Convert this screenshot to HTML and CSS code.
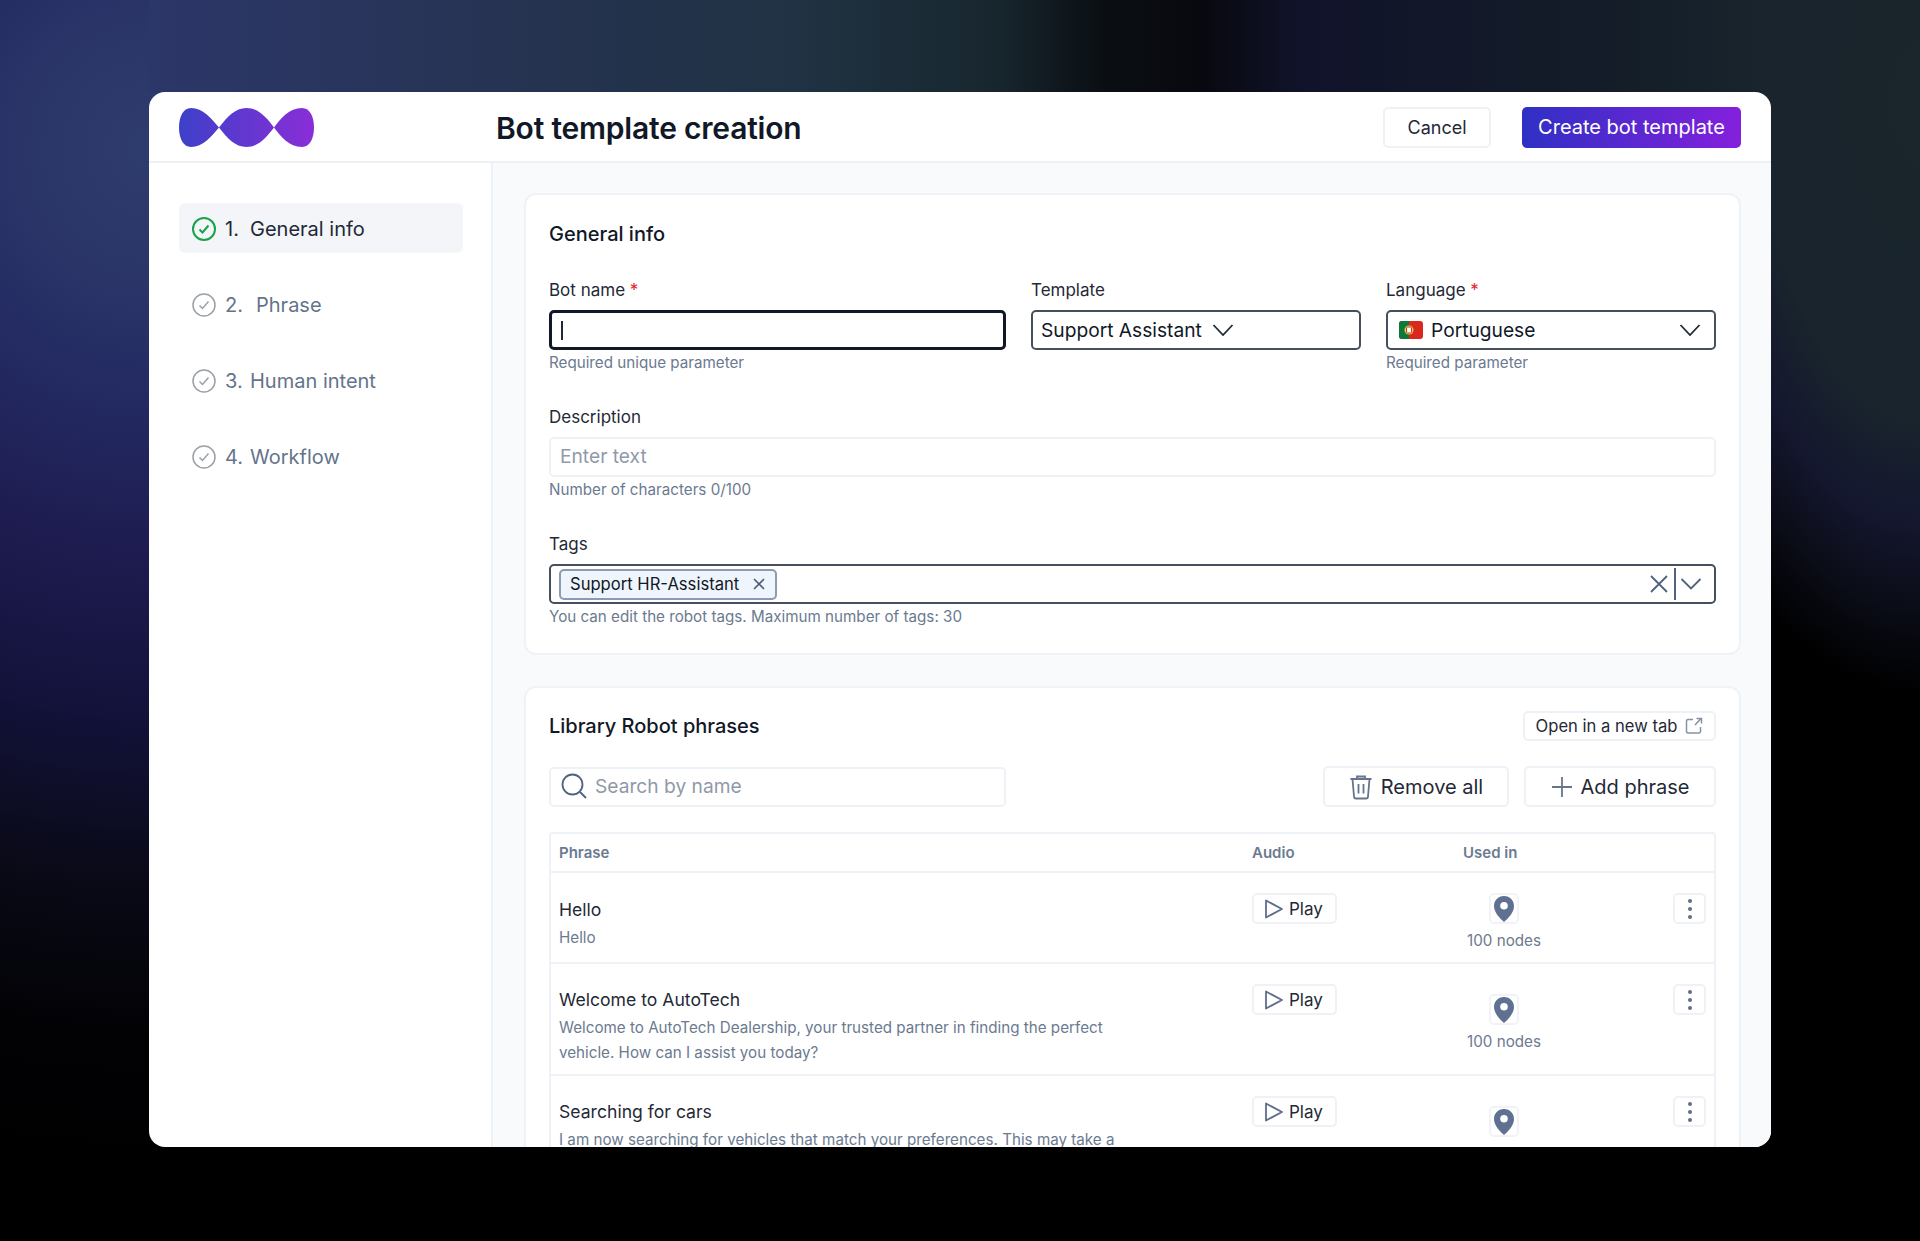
FILE: index.html
```html
<!DOCTYPE html>
<html lang="en">

<head>
  <meta charset="UTF-8">
  <title>Bot template creation</title>
  <link rel="stylesheet" href="styles.css">
</head>

<body>
  <div class="window">
    <header class="topbar">
      <div class="logo-box">
        <svg class="logo" width="135" height="39" viewBox="0 0 135 39">
          <defs>
            <linearGradient id="logo-grad" gradientUnits="userSpaceOnUse" x1="0" y1="0" x2="135" y2="0">
              <stop offset="0" stop-color="#3d40c8" />
              <stop offset="1" stop-color="#8a2ed8" />
            </linearGradient>
          </defs>
          <path fill="url(#logo-grad)" d="M40 19.5C32 10 24 0 12 0C4 0 0 9 0 19.5C0 30 4 39 12 39C24 39 32 29 40 19.5Z" />
          <path fill="url(#logo-grad)" d="M40 19.5C48 9 56 0 67.5 0C79 0 87 9 95 19.5C87 30 79 39 67.5 39C56 39 48 30 40 19.5Z" />
          <path fill="url(#logo-grad)" d="M95 19.5C102 10 110 0 123 0C131 0 135 9 135 19.5C135 30 131 39 123 39C110 39 102 29 95 19.5Z" />
        </svg>
      </div>
      <h1 class="page-title">Bot template creation</h1>
      <button class="btn btn-cancel">Cancel</button>
      <button class="btn btn-primary">Create bot template</button>
    </header>

    <div class="main">
      <nav class="sidebar">
        <a class="step step-active">
          <svg class="step-icon" viewBox="0 0 24 24"><circle cx="12" cy="12" r="11" /><path d="M7.5 12.5l3 3 6-7" /></svg>
          <span class="step-num">1.</span><span>General info</span>
        </a>
        <a class="step">
          <svg class="step-icon" viewBox="0 0 24 24"><circle cx="12" cy="12" r="11" /><path d="M7.5 12.5l3 3 6-7" /></svg>
          <span class="step-num step-num-wide">2.</span><span>Phrase</span>
        </a>
        <a class="step">
          <svg class="step-icon" viewBox="0 0 24 24"><circle cx="12" cy="12" r="11" /><path d="M7.5 12.5l3 3 6-7" /></svg>
          <span class="step-num">3.</span><span>Human intent</span>
        </a>
        <a class="step">
          <svg class="step-icon" viewBox="0 0 24 24"><circle cx="12" cy="12" r="11" /><path d="M7.5 12.5l3 3 6-7" /></svg>
          <span class="step-num">4.</span><span>Workflow</span>
        </a>
      </nav>

      <main class="content">
        <section class="card card-info">
          <h2 class="card-title">General info</h2>

          <div class="field-row">
            <div class="field field-name">
              <label class="label">Bot name <span class="req">*</span></label>
              <div class="input input-focus"><span class="caret"></span></div>
              <div class="helper">Required unique parameter</div>
            </div>
            <div class="field field-select">
              <label class="label">Template</label>
              <div class="input input-dark">
                <span>Support Assistant</span>
                <svg class="chevron" width="22" height="12" viewBox="0 0 22 12"><path d="M1.5 1l9.5 10 9.5-10" /></svg>
              </div>
            </div>
            <div class="field field-select">
              <label class="label">Language <span class="req">*</span></label>
              <div class="input input-dark input-lang">
                <svg class="flag" width="24" height="18" viewBox="0 0 24 18">
                  <rect width="24" height="18" rx="3" fill="#d9281e" />
                  <path d="M3 0h7v18H3a3 3 0 0 1-3-3V3a3 3 0 0 1 3-3z" fill="#0d7a3a" />
                  <circle cx="10" cy="9" r="4.5" fill="#f2d23c" />
                  <rect x="7.5" y="6" width="5" height="6" rx="1" fill="#fff" stroke="#c0392b" />
                </svg>
                <span>Portuguese</span>
                <svg class="chevron chevron-end" width="22" height="12" viewBox="0 0 22 12"><path d="M1.5 1l9.5 10 9.5-10" /></svg>
              </div>
              <div class="helper">Required parameter</div>
            </div>
          </div>

          <div class="field-block">
            <label class="label">Description</label>
            <div class="input input-light"><span class="placeholder">Enter text</span></div>
            <div class="helper">Number of characters 0/100</div>
          </div>

          <div class="field-block">
            <label class="label">Tags</label>
            <div class="input input-dark input-tags">
              <span class="tag">
                Support HR-Assistant
                <svg width="14" height="14" viewBox="0 0 14 14"><path d="M2 2l10 10M12 2L2 12" /></svg>
              </span>
              <span class="tag-tools">
                <svg class="tool-x" width="20" height="20" viewBox="0 0 20 20"><path d="M2 2l16 16M18 2L2 18" /></svg>
                <span class="tool-sep"></span>
                <svg class="tool-down" width="22" height="12" viewBox="0 0 22 12"><path d="M1.5 1l9.5 9.500 9.500-9.500" /></svg>
              </span>
            </div>
            <div class="helper">You can edit the robot tags. Maximum number of tags: 30</div>
          </div>
        </section>

        <section class="card card-phrases">
          <div class="phrases-head">
            <h2 class="card-title">Library Robot phrases</h2>
            <button class="btn-small">
              Open in a new tab
              <svg width="18" height="18" viewBox="0 0 18 18"><path d="M8 2.500H3a1.500 1.500 0 0 0-1.500 1.500v10.500a1.500 1.500 0 0 0 1.500 1.500h11a1.500 1.500 0 0 0 1.500-1.500V10M10 8l6-6.500M11.500 1.500H16.500V6.500" /></svg>
            </button>
          </div>

          <div class="toolbar">
            <div class="input input-light input-search">
              <svg width="26" height="26" viewBox="0 0 26 26"><circle cx="11.500" cy="11.500" r="10" /><path d="M19 19l6 6" /></svg>
              <span class="placeholder">Search by name</span>
            </div>
            <button class="btn-tool btn-remove">
              <svg width="24" height="26" viewBox="0 0 24 26"><path d="M1.500 5h21M8 5V2.500h8V5M3.500 5l1.500 17.500a2 2 0 0 0 2 2h10a2 2 0 0 0 2-2L20.500 5M9.500 10v9.500M14.500 10v9.500" /></svg>
              Remove all
            </button>
            <button class="btn-tool btn-add">
              <svg width="22" height="22" viewBox="0 0 22 22"><path d="M11 1v20M1 11h20" /></svg>
              Add phrase
            </button>
          </div>

          <div class="table">
            <div class="table-head">
              <div>Phrase</div>
              <div>Audio</div>
              <div>Used in</div>
            </div>

            <div class="row">
              <div class="phrase">
                <div class="phrase-title">Hello</div>
                <div class="phrase-text">Hello</div>
              </div>
              <button class="btn-play"><svg width="20" height="22" viewBox="0 0 20 22"><path d="M2 2.500v17l16-8.500z" /></svg>Play</button>
              <div class="used">
                <span class="pin-box"><svg width="22" height="28" viewBox="0 0 22 28"><path fill-rule="evenodd" d="M11 1C5 1 1 5.500 1 11c0 6.500 6 12.500 10 16 4-3.500 10-9.500 10-16C21 5.500 17 1 11 1zm0 13.500a3.800 3.800 0 1 1 0-7.600 3.800 3.800 0 0 1 0 7.600z" /></svg></span>
                <span class="used-count">100 nodes</span>
              </div>
              <button class="btn-more"><i></i><i></i><i></i></button>
            </div>

            <div class="row row-tall">
              <div class="phrase">
                <div class="phrase-title">Welcome to AutoTech</div>
                <div class="phrase-text">Welcome to AutoTech Dealership, your trusted partner in finding the perfect vehicle. How can I assist you today?</div>
              </div>
              <button class="btn-play"><svg width="20" height="22" viewBox="0 0 20 22"><path d="M2 2.500v17l16-8.500z" /></svg>Play</button>
              <div class="used used-low">
                <span class="pin-box"><svg width="22" height="28" viewBox="0 0 22 28"><path fill-rule="evenodd" d="M11 1C5 1 1 5.500 1 11c0 6.500 6 12.500 10 16 4-3.500 10-9.500 10-16C21 5.500 17 1 11 1zm0 13.500a3.800 3.800 0 1 1 0-7.600 3.800 3.800 0 0 1 0 7.600z" /></svg></span>
                <span class="used-count">100 nodes</span>
              </div>
              <button class="btn-more"><i></i><i></i><i></i></button>
            </div>

            <div class="row row-tall">
              <div class="phrase">
                <div class="phrase-title">Searching for cars</div>
                <div class="phrase-text">I am now searching for vehicles that match your preferences. This may take a</div>
              </div>
              <button class="btn-play"><svg width="20" height="22" viewBox="0 0 20 22"><path d="M2 2.500v17l16-8.500z" /></svg>Play</button>
              <div class="used used-low">
                <span class="pin-box"><svg width="22" height="28" viewBox="0 0 22 28"><path fill-rule="evenodd" d="M11 1C5 1 1 5.500 1 11c0 6.500 6 12.500 10 16 4-3.500 10-9.500 10-16C21 5.500 17 1 11 1zm0 13.500a3.800 3.800 0 1 1 0-7.600 3.800 3.800 0 0 1 0 7.600z" /></svg></span>
              </div>
              <button class="btn-more"><i></i><i></i><i></i></button>
            </div>
          </div>
        </section>
      </main>
    </div>
  </div>
</body>
</html>
```

FILE: styles.css
```css
* {
  box-sizing: border-box;
}

html,
body {
  height: 100%;
}

body {
  margin: 0;
  padding: 92px 149px 0;
  overflow: hidden;
  font-family: Inter, "Liberation Sans", sans-serif;
  color: #111827;
  /* band above the window, then the left and right glows */
  background:
    linear-gradient(90deg, #2c3769 0%, #263352 22%, #203243 40%, #18272f 52%, #0a0e12 59%, #08090f 65%, #11132a 71%, #131c28 89%, #19242c 100%) 149px 0 / 1622px 92px no-repeat,
    radial-gradient(ellipse 1000px 1050px at 149px 150px, #2e3b6d 0%, #2c3769 10%, #232b62 23%, #1e1c50 38%, #12123a 54%, #0a0a18 69%, #020205 84%, transparent 100%),
    radial-gradient(ellipse 350px 700px at 1920px 100px, #1a262c 0%, #19242c 45%, #14172f 60%, #0b0d18 72%, transparent 85%),
    #000;
}

button {
  font-family: inherit;
  cursor: pointer;
}

.window {
  width: 1622px;
  height: 1055px;
  background: #fff;
  border-radius: 16px;
  overflow: hidden;
  display: flex;
  flex-direction: column;
}

/* top bar */
.topbar {
  flex: none;
  height: 71px;
  display: flex;
  align-items: center;
  padding: 1px 30px 0 30px;
  border-bottom: 2px solid #eceff3;
}

.logo-box {
  width: 317px;
  display: flex;
}

.page-title {
  flex: 1;
  margin: 2px 0 0;
  font-size: 30px;
  font-weight: 600;
  letter-spacing: -0.2px;
}

.btn {
  height: 41px;
  border-radius: 5px;
}

.btn-cancel {
  width: 108px;
  margin-right: 31px;
  background: #fff;
  border: 2px solid #eef1f5;
  color: #1f2937;
  font-size: 18px;
}

.btn-primary {
  width: 219px;
  border: none;
  color: #fff;
  font-size: 20px;
  background: linear-gradient(90deg, #2f30c4, #8420dc);
}

/* sidebar */
.main {
  flex: 1;
  min-height: 0;
  display: flex;
}

.sidebar {
  flex: none;
  width: 344px;
  padding: 40px 28px 0 30px;
  border-right: 2px solid #eef1f5;
}

.step {
  height: 50px;
  margin-bottom: 26px;
  padding: 2px 0 0 13px;
  display: flex;
  align-items: center;
  border-radius: 6px;
  font-size: 20px;
  color: #64748b;
}

.step-icon {
  width: 24px;
  height: 24px;
  margin-right: 9px;
  fill: none;
  stroke: #9aa0a8;
  stroke-width: 1.5;
}

.step-num {
  width: 25px;
}

.step-num-wide {
  width: 31px;
}

.step-active {
  background: #f3f5f9;
  color: #1f2937;
}

.step-active .step-icon {
  stroke: #16a34a;
  stroke-width: 2;
}

/* content */
.content {
  flex: 1;
  min-width: 0;
  padding: 30px 30px 0 31px;
  background: #f8fafc;
  overflow: hidden;
}

.card {
  background: #fff;
  border: 2px solid #eff2f6;
  border-radius: 12px;
  padding: 24px 23px 0;
}

.card-info {
  height: 462px;
  margin-bottom: 31px;
}

.card-phrases {
  padding-top: 23px;
}

.card-title {
  margin: 0;
  font-size: 20px;
  font-weight: 500;
  line-height: 30px;
}

.field-row {
  margin-top: 30px;
  display: flex;
  gap: 25px;
}

.field-name {
  width: 457px;
}

.field-select {
  width: 330px;
}

.label {
  display: block;
  height: 22px;
  margin-bottom: 9px;
  font-size: 17px;
  line-height: 22px;
  color: #1f2937;
}

.req {
  color: #e11d2e;
}

.helper {
  margin-top: 3px;
  font-size: 15.2px;
  line-height: 20px;
  color: #6b7a90;
}

.field-block {
  margin-top: 33px;
}

.input {
  height: 40px;
  display: flex;
  align-items: center;
  padding: 0 8px;
  border-radius: 5px;
  background: #fff;
  font-size: 19.2px;
}

.input-focus {
  border: 3px solid #111827;
}

.input-dark {
  border: 2px solid #454f5e;
}

.input-light {
  padding: 0 9px 2px;
  border: 2px solid #eef1f5;
}

.caret {
  width: 2px;
  height: 19px;
  margin-left: 1px;
  background: #1f2937;
}

.placeholder {
  color: #8f99a8;
}

.chevron {
  margin-left: 10px;
  fill: none;
  stroke: #1f2937;
  stroke-width: 1.8;
}

.chevron-end {
  margin-left: auto;
  margin-right: 5px;
}

.input-lang {
  padding-left: 11px;
}

.flag {
  margin-right: 8px;
}

/* tags */
.input-tags {
  justify-content: space-between;
  padding: 0 12px 0 8px;
}

.tag {
  height: 31px;
  width: 218px;
  display: flex;
  align-items: center;
  justify-content: space-between;
  padding: 0 9px;
  background: #eff5fd;
  border: 2px solid #8d9bb0;
  border-radius: 5px;
  font-size: 16.6px;
}

.tag svg {
  fill: none;
  stroke: #4b5a70;
  stroke-width: 1.6;
}

.tag-tools {
  display: flex;
  align-items: center;
}

.tool-x {
  fill: none;
  stroke: #4f6280;
  stroke-width: 1.8;
}

.tool-sep {
  width: 2px;
  height: 32px;
  margin: 0 4px 0 5px;
  background: #4f6280;
}

.tool-down {
  fill: none;
  stroke: #4f6280;
  stroke-width: 1.8;
}

/* phrases */
.phrases-head {
  display: flex;
  align-items: center;
  justify-content: space-between;
}

.btn-small {
  width: 193px;
  height: 30px;
  display: flex;
  align-items: center;
  justify-content: center;
  gap: 8px;
  background: #fff;
  border: 2px solid #eef1f5;
  border-radius: 5px;
  font-size: 16.6px;
  color: #1f2937;
}

.btn-small svg {
  fill: none;
  stroke: #8592a6;
  stroke-width: 1.5;
}

.toolbar {
  margin-top: 25px;
  display: flex;
  align-items: center;
}

.input-search {
  width: 457px;
  padding-left: 10px;
  gap: 8px;
  margin-right: auto;
}

.input-search svg {
  fill: none;
  stroke: #4f6280;
  stroke-width: 1.8;
}

.btn-tool {
  height: 41px;
  display: flex;
  align-items: center;
  justify-content: center;
  gap: 8px;
  background: #fff;
  border: 2px solid #eef1f5;
  border-radius: 5px;
  font-size: 20px;
  color: #1f2937;
}

.btn-tool svg {
  fill: none;
  stroke: #66758c;
  stroke-width: 1.8;
}

.btn-remove {
  width: 186px;
  margin-right: 15px;
}

.btn-add {
  width: 192px;
}

/* table */
.table {
  margin-top: 25px;
  border: 2px solid #eef1f5;
  border-bottom: none;
  border-radius: 4px 4px 0 0;
}

.table-head,
.row {
  display: grid;
  grid-template-columns: 693px 211px 80px 1fr;
  padding-left: 8px;
  border-bottom: 2px solid #eef1f5;
}

.table-head {
  height: 39px;
  align-items: center;
  font-size: 15px;
  font-weight: 600;
  color: #6b7a90;
}

.row {
  padding-top: 20px;
  padding-bottom: 11px;
  align-items: start;
}

.row-tall {
  padding-bottom: 9px;
}

.phrase {
  margin-top: 6px;
  width: 570px;
}

.row-tall .phrase {
  margin-top: 5px;
}

.phrase-title {
  font-size: 17.6px;
  line-height: 22px;
  color: #1f2937;
}

.phrase-text {
  margin-top: 4px;
  font-size: 15.2px;
  line-height: 25px;
  color: #6b7a90;
}

.btn-play {
  width: 85px;
  height: 31px;
  padding: 0 0 0 10px;
  display: flex;
  align-items: center;
  gap: 5px;
  background: #fff;
  border: 2px solid #eef1f5;
  border-radius: 5px;
  font-size: 17px;
  color: #1f2937;
}

.btn-play svg {
  fill: none;
  stroke: #5f6e88;
  stroke-width: 1.8;
  stroke-linejoin: round;
}

.used {
  display: flex;
  flex-direction: column;
  align-items: center;
  margin-left: 2px;
}

.used-low {
  margin-top: 10px;
}

.pin-box {
  width: 30px;
  height: 31px;
  display: flex;
  align-items: center;
  justify-content: center;
  border: 2px solid #f1f3f7;
  border-radius: 5px;
}

.pin-box svg {
  fill: #5f7190;
}

.used-count {
  margin-top: 7px;
  font-size: 15.2px;
  line-height: 20px;
  white-space: nowrap;
  color: #6b7a90;
}

.btn-more {
  justify-self: end;
  width: 33px;
  height: 31px;
  margin-right: 8px;
  padding: 0;
  display: flex;
  flex-direction: column;
  align-items: center;
  justify-content: center;
  gap: 4px;
  background: #fff;
  border: 2px solid #eef1f5;
  border-radius: 5px;
}

.btn-more i {
  width: 4px;
  height: 4px;
  border-radius: 50%;
  background: #5f6e88;
}
```
